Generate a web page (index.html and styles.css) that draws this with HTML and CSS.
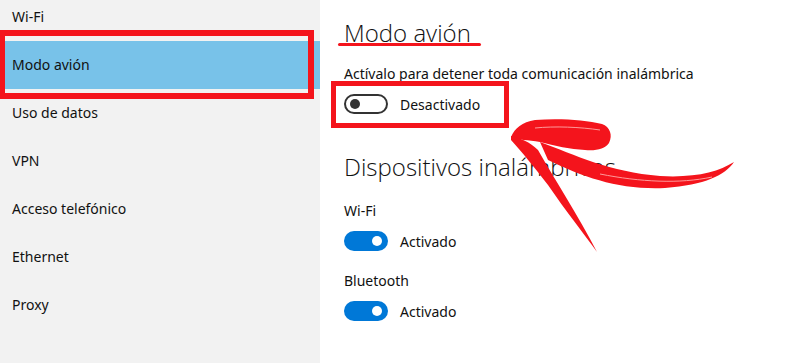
FILE: index.html
```html
<!DOCTYPE html>
<html lang="es">
<head>
    <meta charset="UTF-8">
    <title>Red e Internet - Modo avión</title>
    <link rel="stylesheet" href="styles.css">
</head>
<body>
    <div class="page">
        <aside class="sidebar">
            <nav class="menu">
                <a href="#">Wi-Fi</a>
                <a href="#" class="active">Modo avión</a>
                <a href="#">Uso de datos</a>
                <a href="#">VPN</a>
                <a href="#">Acceso telefónico</a>
                <a href="#">Ethernet</a>
                <a href="#">Proxy</a>
            </nav>
        </aside>

        <main class="content">
            <h1>Modo avión</h1>
            <p class="hint">Actívalo para detener toda comunicación inalámbrica</p>
            <div class="switch-row">
                <span class="switch off"><span class="knob"></span></span>
                <span>Desactivado</span>
            </div>

            <h2>Dispositivos inalámbricos</h2>
            <p class="label">Wi-Fi</p>
            <div class="switch-row">
                <span class="switch on"><span class="knob"></span></span>
                <span>Activado</span>
            </div>
            <p class="label second">Bluetooth</p>
            <div class="switch-row">
                <span class="switch on"><span class="knob"></span></span>
                <span>Activado</span>
            </div>
        </main>

        <!-- red marks drawn over the screenshot -->
        <div class="mark box-menu"></div>
        <div class="mark box-switch"></div>
        <div class="mark underline"></div>
        <svg class="arrow" width="800" height="363" viewBox="0 0 800 363">
            <path d="M511 137 C515 128 522 122 535 120 C560 118 585 120 602 124 C610 127 613 135 609 143 C605 149 596 151 585 150 C570 149 555 146 540 142 C528 140 518 140 511 137 Z" fill="#f4141c"/>
            <path d="M540 142 C575 155 610 172 660 176 C695 178 718 172 734 162 C725 175 705 185 665 188 C620 190 585 178 548 160 Z" fill="#f4141c"/>
            <path d="M511 136 C520 138 530 142 538 150 C555 180 578 215 597 252 C585 235 565 210 548 185 C535 168 522 152 511 140 Z" fill="#f4141c"/>
            <path d="M535 128 C555 126 580 127 600 130" stroke="#ff9a9a" stroke-width="1" fill="none"/>
            <path d="M600 174 C640 182 680 184 712 177" stroke="#ff9a9a" stroke-width="1" fill="none"/>
        </svg>
    </div>
</body>
</html>
```

FILE: styles.css
```css
body {
    margin: 0;
    font-family: "Noto Sans", "Open Sans", sans-serif;
    font-size: 14px;
    color: #111;
    background: #fff;
}

.page {
    position: relative;
    display: flex;
    width: 800px;
    height: 363px;
    overflow: hidden;
}

.sidebar {
    width: 320px;
    flex-shrink: 0;
    background-color: #f2f2f2;
}

.menu {
    display: flex;
    flex-direction: column;
    margin-top: -7px;
}

.menu a {
    height: 48px;
    line-height: 48px;
    padding-left: 12px;
    color: #111;
    text-decoration: none;
}

.menu a.active {
    background-color: #78c2e9;
}

.content {
    flex: 1;
    padding: 16px 0 0 24px;
}

h1, h2 {
    margin: 0;
    font-family: "Open Sans", "Noto Sans", sans-serif;
    font-weight: 300;
    font-size: 24px;
    line-height: 34px;
    color: #111;
}

h2 {
    margin-top: 36px;
}

.hint {
    margin: 14px 0 0;
    line-height: 20px;
}

.label {
    margin: 17px 0 0;
    line-height: 20px;
}

.label.second {
    margin-top: 20px;
}

.switch-row {
    display: flex;
    align-items: center;
    gap: 12px;
    height: 20px;
    margin-top: 10px;
}

.switch {
    display: flex;
    align-items: center;
    box-sizing: border-box;
    width: 44px;
    height: 20px;
    border-radius: 10px;
    padding: 0 4px;
}

.switch .knob {
    width: 10px;
    height: 10px;
    border-radius: 50%;
}

.switch.off {
    border: 2px solid #333;
}

.switch.off .knob {
    background: #333;
}

.switch.on {
    background: #0078d7;
    justify-content: flex-end;
    padding-right: 6px;
}

.switch.on .knob {
    background: #fff;
}

.mark {
    position: absolute;
    box-sizing: border-box;
}

.box-menu {
    left: -1px;
    top: 30px;
    width: 315px;
    height: 69px;
    border: 6px solid #f4141c;
}

.box-switch {
    left: 331px;
    top: 81px;
    width: 178px;
    height: 47px;
    border: 5px solid #f4141c;
}

.underline {
    left: 338px;
    top: 43px;
    width: 143px;
    height: 3px;
    border-radius: 2px;
    background: #f4141c;
}

.arrow {
    position: absolute;
    left: 0;
    top: 0;
    pointer-events: none;
}
```
